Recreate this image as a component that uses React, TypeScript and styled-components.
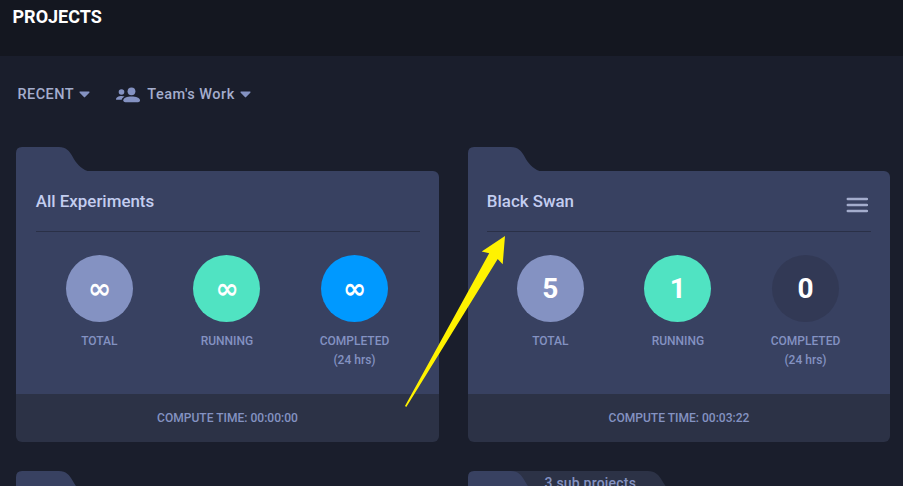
import React from "react";
import styled, { createGlobalStyle } from "styled-components";

const GlobalStyle = createGlobalStyle`
  * { box-sizing: border-box; }
  html, body { margin: 0; height: 100%; overflow: hidden; background: #1a1e2c; }
  body { font-family: Roboto, sans-serif; font-weight: 500; }
`;

const Page = styled.div`
  position: relative;
  height: 486px;
  overflow: hidden;
  background: #1a1e2c;
`;

const Header = styled.header`
  height: 56px;
  padding: 6px 12.5px;
  background: #141720;
  color: #fff;
  font-size: 18px;
  line-height: 22px;
  font-weight: 700;
`;

const Toolbar = styled.nav`
  display: flex;
  align-items: center;
  height: 76px;
  padding: 0 17.4px;
  color: #a4adcd;
  font-size: 14.5px;
  letter-spacing: 0.48px;
`;

const Picker = styled.div<{ $offset?: number }>`
  display: flex;
  align-items: center;
  margin-left: ${(p) => p.$offset ?? 0}px;
  white-space: nowrap;
`;

const Caret = styled.svg`
  width: 11px;
  height: 7px;
  margin: 1px 0 0 5px;
  fill: #8492c2;
`;

const TeamIcon = styled.svg`
  width: 25px;
  height: 16px;
  margin: 1px 6.5px 0 0;
  fill: #8492c2;
`;

const Grid = styled.main`
  display: grid;
  grid-template-columns: 423px 422px;
  column-gap: 29px;
  row-gap: 29px;
  padding: 15px 13px 0 16px;
`;

const Folder = styled.article`
  position: relative;
  height: 295px;
`;

const TabRow = styled.div`
  position: relative;
  display: flex;
  height: 24px;
`;

const TabShape = styled.svg`
  display: block;
  height: 25px;
  flex: none;
`;

const SubProjects = styled.span`
  position: absolute;
  left: 76.5px;
  top: 2px;
  color: #8492c2;
  font-size: 14px;
  line-height: 20px;
  letter-spacing: 0.22px;
`;

const Body = styled.div`
  height: 223px;
  padding: 0 19px 0 20px;
  background: #384161;
  border-radius: 0 6px 0 0;
`;

const TitleRow = styled.div<{ $shift: number }>`
  display: flex;
  justify-content: space-between;
  height: 61px;
  margin-left: ${(p) => p.$shift}px;
  border-bottom: 1px solid #2a3047;
`;

const Title = styled.h2`
  margin: 20px 0 0 -0.2px;
  color: #c3cdf0;
  font-size: 16.9px;
  line-height: 21px;
  font-weight: 500;
`;

const MenuIcon = styled.svg`
  width: 22px;
  height: 16px;
  margin: 26px 3px 0 0;
`;

const Stats = styled.div<{ $shift: number }>`
  display: flex;
  justify-content: space-between;
  padding: 23px 15.5px 0 ${(p) => 13.3 + p.$shift}px;
`;

const Stat = styled.div`
  display: flex;
  flex-direction: column;
  align-items: center;
  width: 100px;
  color: #8492c2;
  font-size: 12px;
  line-height: 19px;
  text-align: center;
`;

const Circle = styled.div<{ $color: string; $symbol: boolean }>`
  display: flex;
  align-items: center;
  justify-content: center;
  width: 67px;
  height: 67px;
  margin-bottom: 10px;
  border-radius: 50%;
  background: ${(p) => p.$color};
  color: #fff;
  font-family: ${(p) => (p.$symbol ? '"DejaVu Sans"' : "Roboto")}, sans-serif;
  font-size: 28px;
  font-weight: 700;
`;

const Footer = styled.footer`
  height: 48px;
  border-radius: 0 0 6px 6px;
  background: #2c3246;
  color: #8492c2;
  font-size: 12.05px;
  line-height: 48px;
  text-align: center;
`;

const Pointer = styled.svg`
  position: absolute;
  left: 400px;
  top: 230px;
  width: 112px;
  height: 182px;
  fill: #fff200;
`;

const Arrow = () => (
  <Caret viewBox="0 0 11 7">
    <path d="M1.2.5h8.6c.7 0 1 .7.5 1.2L6.1 6.1c-.4.4-.8.4-1.2 0L.7 1.7C.2 1.2.5.5 1.2.5Z" />
  </Caret>
);

const Count = ({ value, color }: { value: string; color: string }) => (
  <Circle $color={color} $symbol={value === "∞"}>{value}</Circle>
);

const TAB = "M0 25V6Q0 0 6 0H43C50 0 53.500 4 56.500 9.5C60 16 64.500 21.500 71.500 24V25Z";
const BACK_TAB = "M40 25V0H180C187 0 191 4 194 9.5C197.500 16 203 22 210 24V25Z";

type FolderProps = {
  name?: string;
  values?: string[];
  doneColor?: string;
  time?: string;
  menu?: boolean;
  shift?: number;
  sub?: string;
};

const FolderCard = ({ name, values = [], doneColor = "#0099ff", time, menu, shift = 0, sub }: FolderProps) => (
  <Folder>
    <TabRow>
      <TabShape width="212" viewBox="0 0 212 25">
        {sub && <path d={BACK_TAB} fill="#2c3246" />}
        <path d={TAB} fill="#384161" />
      </TabShape>
      {sub && <SubProjects>{sub}</SubProjects>}
    </TabRow>
    <Body>
      {name && (
        <>
          <TitleRow $shift={shift}>
            <Title>{name}</Title>
            {menu && (
              <MenuIcon viewBox="0 0 22 16" stroke="#a4adcd" strokeWidth="2.5" strokeLinecap="round">
                <path d="M1.800 2H21M1.800 8H21M1.800 14H21" />
              </MenuIcon>
            )}
          </TitleRow>
          <Stats $shift={shift}>
            <Stat>
              <Count value={values[0]} color="#8492c2" />TOTAL
            </Stat>
            <Stat>
              <Count value={values[1]} color="#50e3c2" />RUNNING
            </Stat>
            <Stat>
              <Count value={values[2]} color={doneColor} />COMPLETED<br />(24 hrs)
            </Stat>
          </Stats>
        </>
      )}
    </Body>
    <Footer>{time && `COMPUTE TIME: ${time}`}</Footer>
  </Folder>
);

export default function App() {
  return (
    <Page>
      <GlobalStyle />
      <Header>PROJECTS</Header>
      <Toolbar>
        <Picker>RECENT<Arrow /></Picker>
        <Picker $offset={25.7}>
          <TeamIcon viewBox="0 0 25 16">
            <circle cx="5.500" cy="5" r="2.800" />
            <path d="M0 12.500C0 10.200 2.500 9 5.500 9C6.700 9 7.800 9.200 8.600 9.500C6.900 10.400 6 11.500 5.700 12.800H1Q0 12.800 0 12.500Z" />
            <circle cx="15.500" cy="4.300" r="3.900" />
            <path d="M7.300 13.300C7.300 10.600 11 9.400 15.500 9.400S24 10.600 24 13.300Q24 15.300 22 15.300H9.300Q7.300 15.300 7.300 13.300Z" />
          </TeamIcon>
          Team's Work<Arrow />
        </Picker>
      </Toolbar>
      <Grid>
        <FolderCard name="All Experiments" values={["∞", "∞", "∞"]} time="00:00:00" />
        <FolderCard name="Black Swan" values={["5", "1", "0"]} doneColor="#323955" time="00:03:22" menu shift={-1} />
        <FolderCard />
        <FolderCard sub="3 sub projects" />
      </Grid>
      <Pointer viewBox="400 230 112 182">
        <path d="M505 236L481.700 251.500L489.200 253.200L405 406L406.300 407L497.700 259L502.700 264.300Z" />
      </Pointer>
    </Page>
  );
}
